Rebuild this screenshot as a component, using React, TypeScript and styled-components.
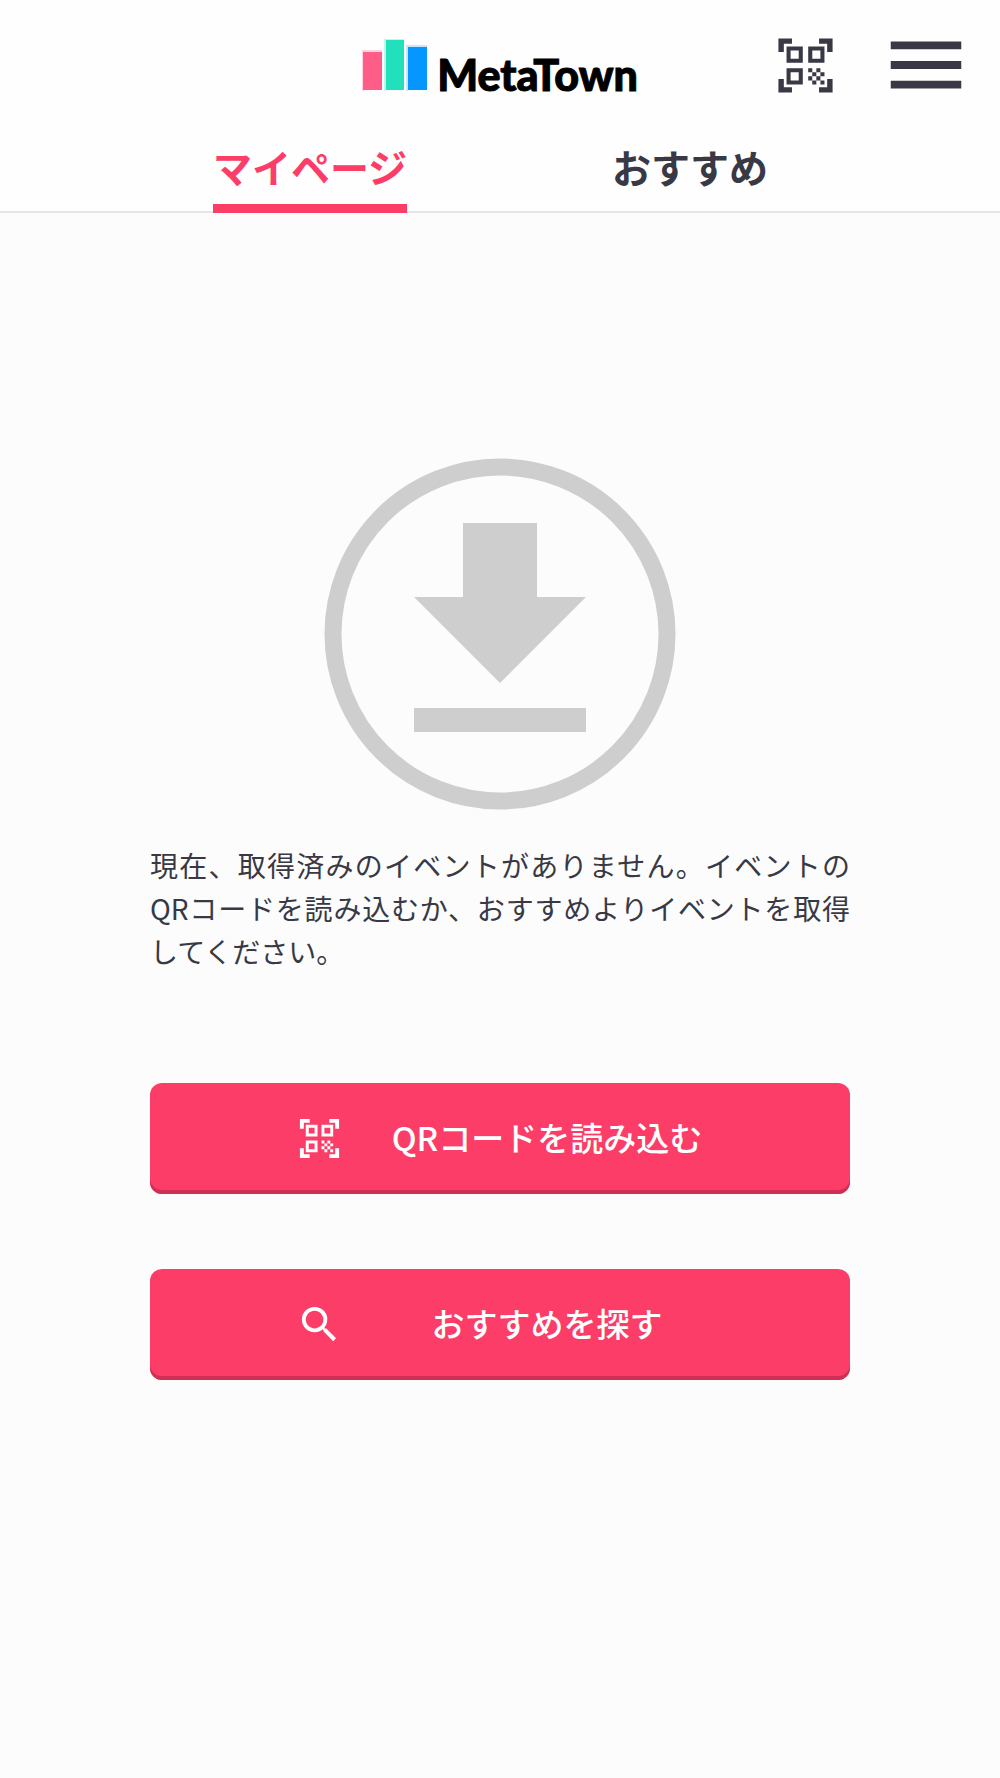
import React from "react";
import styled, { createGlobalStyle } from "styled-components";
import { MdMenu, MdQrCodeScanner, MdSearch } from "react-icons/md";

const ink = "#383945";
const accent = "#fc3d68";
const accentDark = "#cf2f55";

const GlobalStyle = createGlobalStyle`
  *, *::before, *::after {
    box-sizing: border-box;
  }
  body {
    margin: 0;
    background: #fcfcfc;
    color: ${ink};
    font-family: "Noto Sans CJK JP", sans-serif;
  }
`;

const Header = styled.header`
  background: #fefefe;
  border-bottom: 2px solid #e6e6e6;
`;

const TopBar = styled.div`
  display: grid;
  grid-template-columns: 1fr auto 1fr;
  align-items: center;
  height: 130px;
  padding: 0 27px;
`;

const Logo = styled.a`
  grid-column: 2;
  display: flex;
  align-items: flex-end;
  gap: 8px;
  color: #000;
  text-decoration: none;
`;

const LogoName = styled.span`
  font-family: Lato, sans-serif;
  font-size: 43px;
  font-weight: 900;
  line-height: 32px;
  -webkit-text-stroke: 1px #000;
`;

const Tools = styled.div`
  display: flex;
  align-items: center;
  justify-content: flex-end;
  gap: 41px;
`;

const IconButton = styled.button`
  display: flex;
  padding: 0;
  border: 0;
  background: none;
  color: ${ink};
  cursor: pointer;
`;

const Tabs = styled.nav`
  display: flex;
  padding: 0 12%;
  margin-bottom: -2px;
`;

const TabCell = styled.div`
  flex: 1;
  display: flex;
  justify-content: center;
`;

const Tab = styled.a<{ $active?: boolean }>`
  height: 83px;
  border-bottom: 9px solid ${(p) => (p.$active ? accent : "transparent")};
  color: ${(p) => (p.$active ? accent : ink)};
  font-size: 39px;
  font-weight: 700;
  line-height: 72px;
  text-decoration: none;
`;

const Main = styled.main`
  display: flex;
  flex-direction: column;
  padding: 245px 15% 80px;
`;

const EmptyMark = styled.svg`
  align-self: center;
  width: 352px;
  height: 352px;
`;

const Message = styled.p`
  margin: 34px 0 0;
  font-size: 28px;
  line-height: 43px;
  text-align: justify;
`;

const Actions = styled.div`
  display: flex;
  flex-direction: column;
  gap: 75px;
  margin-top: 110px;
`;

const ActionButton = styled.button`
  display: flex;
  align-items: center;
  height: 111px;
  padding: 0 99px 0 146px;
  border: 0;
  border-radius: 12px;
  background: ${accent};
  box-shadow: inset 0 -4px 0 ${accentDark};
  color: #fff;
  font-family: inherit;
  font-size: 33px;
  font-weight: 500;
  line-height: 48px;
  cursor: pointer;
`;

const ActionLabel = styled.span`
  flex: 1;
  padding-bottom: 4px;
  text-align: center;
`;

function LogoMark() {
  return (
    <svg width="67" height="52" viewBox="0 0 67 52" aria-hidden="true">
      <path d="M0 11h20v2H2v39H0z" fill="#fbd3de" />
      <path d="M22 0h20v2H24v50h-2z" fill="#c5f5e8" />
      <path d="M44 6h21v2H46v44h-2z" fill="#c9e4fb" />
      <path d="M1 13h19v38H1z" fill="#fe5d87" />
      <path d="M24 1h18v50H24z" fill="#20e1bb" />
      <path d="M46 8h19v43H46z" fill="#0597ff" />
    </svg>
  );
}

export default function App() {
  return (
    <>
      <GlobalStyle />
      <Header>
        <TopBar>
          <Logo href="#">
            <LogoMark />
            <LogoName>MetaTown</LogoName>
          </Logo>
          <Tools>
            <IconButton type="button" aria-label="QRコード">
              <MdQrCodeScanner size={65} />
            </IconButton>
            <IconButton type="button" aria-label="メニュー">
              <MdMenu size={94} />
            </IconButton>
          </Tools>
        </TopBar>
        <Tabs>
          <TabCell>
            <Tab href="#mypage" $active aria-current="page">
              マイページ
            </Tab>
          </TabCell>
          <TabCell>
            <Tab href="#recommend">おすすめ</Tab>
          </TabCell>
        </Tabs>
      </Header>
      <Main>
        <EmptyMark viewBox="0 0 352 352" fill="#cecece" aria-hidden="true">
          <circle cx="176" cy="176" r="167" fill="none" stroke="#cecece" strokeWidth="17" />
          <path d="M139 65h74v74h49l-86 86-86-86h49z" />
          <path d="M90 250h172v24H90z" />
        </EmptyMark>
        <Message>
          現在、取得済みのイベントがありません。イベントのQRコードを読み込むか、おすすめよりイベントを取得してください。
        </Message>
        <Actions>
          <ActionButton type="button">
            <MdQrCodeScanner size={47} />
            <ActionLabel>QRコードを読み込む</ActionLabel>
          </ActionButton>
          <ActionButton type="button">
            <MdSearch size={47} />
            <ActionLabel>おすすめを探す</ActionLabel>
          </ActionButton>
        </Actions>
      </Main>
    </>
  );
}
